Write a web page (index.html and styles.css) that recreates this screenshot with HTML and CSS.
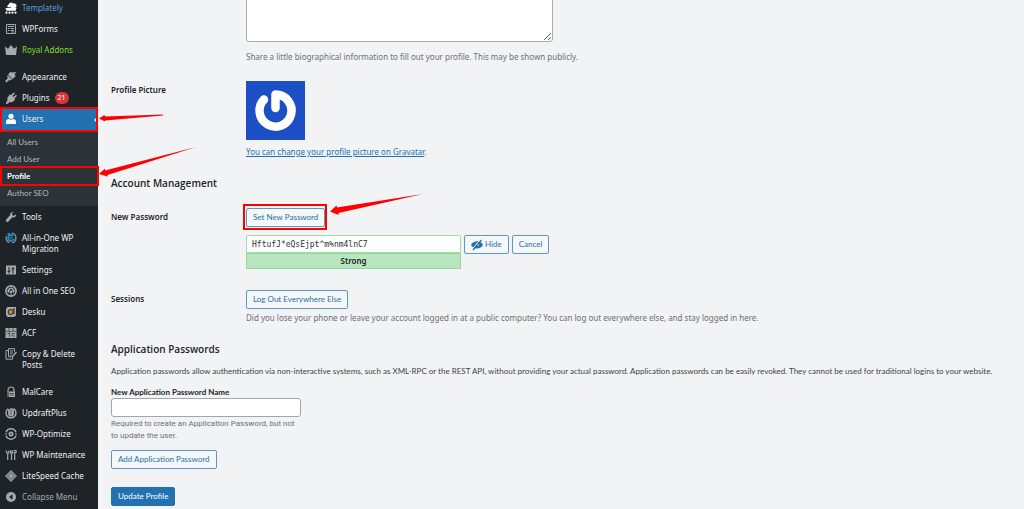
FILE: index.html
```
<!DOCTYPE html>
<html lang="en">
<head>
<meta charset="utf-8">
<title>Profile</title>
<link rel="stylesheet" href="styles.css">
</head>
<body>
<div class="layout">
<nav class="sidebar" aria-label="Main menu">
  <ul class="menu">
    <li><a class="item blue" href="#"><svg class="icon" viewBox="0 0 12 12"><path fill="#fff" d="M.5 6h11l-1 2.700h-9zM3 6a2.200 2.200 0 0 1 .6-3.600A2.600 2.600 0 0 1 8 1.500 2.400 2.400 0 0 1 10 6z"/><path stroke="#1d2327" stroke-width=".7" d="M2 5.500h4"/><circle cx="1.500" cy="10.700" r="1.100" fill="#fff"/><circle cx="4.500" cy="10.700" r="1.100" fill="#fff"/><circle cx="7.500" cy="10.700" r="1.100" fill="#fff"/><circle cx="10.500" cy="10.700" r="1.100" fill="#fff"/></svg><span>Templately</span></a></li>
    <li><a class="item" href="#"><svg class="icon" viewBox="0 0 12 12"><path fill="none" stroke="#a7aaad" d="M1.500 1.500h9v9h-9zM3 3.500h6M3 5.500h1.500M5.500 5.500H9M3 7.500h1.500M5.500 7.500H9M6.500 9H9"/></svg><span>WPForms</span></a></li>
    <li><a class="item green" href="#"><svg class="icon" viewBox="0 0 12 12"><path fill="#a7aaad" d="M0 2.500l3 2.200L6 1l3 3.700 3-2.200-1 8.500H1z"/></svg><span>Royal Addons</span></a></li>
    <li class="gap"><a class="item" href="#"><svg class="icon" viewBox="0 0 12 12"><path fill="#a7aaad" d="M5.500.8l1.500.8 4.500-.6-2 2.200L10.800 5 7.500 8.300 3 3.800zM2.600 4.200l4.500 4.500-1.700.6-1.100-.4-2.900 2.600L0 10.300l2.800-3-.6-1.500z"/></svg><span>Appearance</span></a></li>
    <li><a class="item" href="#"><svg class="icon" viewBox="0 0 12 12"><path fill="#a7aaad" d="M6 3L8.700.5l1.200 1L7.500 4l1 1L11 2.700l1 1.100-2.500 2.600.7 1-2.500 2.500-3.300.3-1.800 1.500-1.600.2V10.500l1.300-1.400.2-3.600L4.800 2.600z"/></svg><span>Plugins</span><span class="badge">21</span></a></li>
    <li class="current"><a class="item" href="#"><svg class="icon" viewBox="0 0 12 12"><circle cx="6" cy="3.300" r="2.600" fill="#fff"/><path fill="#fff" d="M1 11V8.500C1 6.800 2.700 6 4.200 6L6 7l1.800-1c1.500 0 3.200.8 3.200 2.500V11z"/></svg><span>Users</span></a>
      <ul class="submenu">
        <li><a href="#">All Users</a></li>
        <li><a href="#">Add User</a></li>
        <li><a class="active" href="#" aria-current="page">Profile</a></li>
        <li><a href="#">Author SEO</a></li>
      </ul>
    </li>
    <li><a class="item" href="#"><svg class="icon" viewBox="0 0 12 12"><path fill="#a7aaad" d="M11 3.200L9 4.800 7.400 4.300 7 2.800 8.600 1C6.800.6 4.800 2 5.100 4.200L1.200 8.400c-1.200 1.300.6 3.400 2.200 2.100l4-4.200C9.700 6.800 11.700 5.300 11 3.200z"/></svg><span>Tools</span></a></li>
    <li><a class="item" href="#"><svg class="icon" viewBox="0 0 12 12"><path fill="none" stroke="#8c9196" stroke-width="1.300" d="M6.500 1.200a4.800 4.800 0 0 1 .5 9.500M4.500 10.600A4.800 4.800 0 0 1 1.600 4"/><path fill="none" stroke="#2196cf" stroke-width="1.500" d="M8.300 4A3 3 0 1 0 9 6.500M2.500 2.500L5 1.500"/><circle cx="6" cy="6" r="1.600" fill="#157aae"/></svg><span>All-in-One WP Migration</span></a></li>
    <li><a class="item" href="#"><svg class="icon" viewBox="0 0 12 12"><path fill="#a7aaad" d="M1 1.500h10v9H1z"/><path stroke="#1d2327" d="M4 3v6.500M8 3v6.500M2.500 7.200h3M6.500 4.800h3"/></svg><span>Settings</span></a></li>
    <li><a class="item" href="#"><svg class="icon" viewBox="0 0 12 12"><circle cx="6" cy="6" r="5.100" fill="none" stroke="#a7aaad" stroke-width="1.600"/><path fill="none" stroke="#a7aaad" stroke-width="1.500" d="M3.700 7.500a2.700 2.700 0 1 1 4.600 0"/><path fill="#a7aaad" d="M4.500 5h.8v1h1.400V5h.8v2L6.500 8v3h-1V8l-1-1z"/></svg><span>All in One SEO</span></a></li>
    <li><a class="item" href="#"><svg class="icon" viewBox="0 0 12 12"><path fill="#a7aaad" d="M2.500 1H11v8.500L9 11H2.500L1 9V3z"/><circle cx="5.700" cy="6" r="3" fill="#39322b"/><circle cx="5.700" cy="6" r="2" fill="#d18a35"/><path stroke="#1d2327" d="M9 2v6"/></svg><span>Desku</span></a></li>
    <li><a class="item" href="#"><svg class="icon" viewBox="0 0 12 12"><path fill="#a7aaad" d="M.5 1h11v10H.5z"/><path stroke="#3a4148" stroke-width=".8" fill="none" d="M.5 4.300h11M4 1v3M8 1v3M4.500 5v5M2.500 6.500h2M7 6.500h3M7 9h3M7 6.500V9"/></svg><span>ACF</span></a></li>
    <li><a class="item" href="#"><svg class="icon" viewBox="0 0 12 12"><path fill="none" stroke="#a7aaad" d="M3.500.7h6v3M3.500.7v8h3M3.300 2.500H1v8.700h6.500V9M5 3h3M5 5h3M5 7h1.500"/><path stroke="#a7aaad" stroke-width="1.500" d="M7 9l4.500-5"/></svg><span>Copy &amp; Delete Posts</span></a></li>
    <li class="gap"><a class="item" href="#"><svg class="icon" viewBox="0 0 12 12"><path fill="none" stroke="#a7aaad" stroke-width="1.200" d="M3 6V4a3 3 0 0 1 6 0v2"/><path fill="#a7aaad" d="M3.500 5.500H10V11H3.500z"/><path stroke="#8e4a50" d="M2.500 6v5"/><path stroke="#1d2327" stroke-width=".6" d="M4.500 7.500H9M4.500 9H9"/></svg><span>MalCare</span></a></li>
    <li><a class="item" href="#"><svg class="icon" viewBox="0 0 12 12"><path fill="none" stroke="#a7aaad" stroke-width="1.400" d="M3 1.800a5 5 0 1 0 6 0"/><path fill="none" stroke="#a7aaad" stroke-width="1.800" d="M4 2v4.500a2 2 0 0 0 4 0V1.500"/><path stroke="#a7aaad" stroke-width="1.500" d="M6 1v6"/></svg><span>UpdraftPlus</span></a></li>
    <li><a class="item" href="#"><svg class="icon" viewBox="0 0 12 12"><path fill="none" stroke="#a7aaad" stroke-width="1.500" d="M1 4.200a5.400 5.400 0 0 1 10 0M1 7.800a5.400 5.400 0 0 0 10 0"/><circle cx="6" cy="6" r="2.500" fill="#a7aaad"/><circle cx="6" cy="6" r="1" fill="#4b5157"/><path stroke="#a7aaad" d="M0 6h2M10 6h2"/></svg><span>WP-Optimize</span></a></li>
    <li><a class="item" href="#"><svg class="icon" viewBox="0 0 12 12"><path fill="none" stroke="#a7aaad" stroke-width="1.200" d="M1.500 1.500v2l1.200 1 1.200-1v-2M2.700 4.500V11M6.500 4v7M5.500 2h2v2h-2zM9.700 4v7M8.500 1.500h2.500v2H8.500"/></svg><span>WP Maintenance</span></a></li>
    <li><a class="item" href="#"><svg class="icon" viewBox="0 0 12 12"><path fill="#8c9196" d="M6 0l6 6-6 6-6-6z"/><path fill="none" stroke="#646a70" stroke-width=".8" d="M6 2.500L9.500 6 6 9.500 2.500 6z"/><circle cx="6" cy="6" r="1.300" fill="#a7aaad"/></svg><span>LiteSpeed Cache</span></a></li>
    <li><button type="button" class="item collapse"><svg class="icon" viewBox="0 0 12 12"><circle cx="6" cy="6" r="5" fill="#a7aaad"/><path fill="#1d2327" d="M7.500 3.300v5.400L4 6z"/></svg><span>Collapse Menu</span></button></li>
  </ul>
</nav>
<main class="content">
  <form>
    <div class="row bio">
      <div></div>
      <div><textarea class="bio-text" aria-label="Biographical Info"></textarea>
      <p class="description">Share a little biographical information to fill out your profile. This may be shown publicly.</p></div>
    </div>
    <div class="row picture">
      <div class="label">Profile Picture</div>
      <div>
        <svg class="avatar" viewBox="0 0 59 59" role="img" aria-label="Avatar"><path fill="#1d4fc4" d="M0 0h59v59H0z"/><path fill="none" stroke="#fff" stroke-width="8.500" stroke-linecap="round" stroke-linejoin="round" d="M18 18.500A16 16 0 1 0 29.500 13.600V27"/></svg>
        <p class="description"><a class="link" href="#">You can change your profile picture on Gravatar</a>.</p>
      </div>
    </div>
    <h2 class="heading">Account Management</h2>
    <div class="row password">
      <label class="label" for="pass">New Password</label>
      <div>
        <button type="button" class="btn">Set New Password</button>
        <div class="pass-line">
          <div class="pass-box">
            <input id="pass" class="field pass-input" type="text" value="HftufJ*eQsEjpt^m%nm4lnC7">
            <div class="strength">Strong</div>
          </div>
          <button type="button" class="btn"><svg class="eye" viewBox="0 0 12 12"><path fill="#2271b1" d="M0 6c2-5 10-5 12 0-2 4.500-10 4.500-12 0z"/><circle cx="6.500" cy="5.500" r="1.500" fill="#f3f5f6"/><path stroke="#f3f5f6" d="M1 10.200L9.500.5"/><path stroke="#2271b1" stroke-width="1.300" d="M2 11l8.500-10"/></svg>Hide</button>
          <button type="button" class="btn">Cancel</button>
        </div>
      </div>
    </div>
    <div class="row sessions">
      <div class="label">Sessions</div>
      <div><button type="button" class="btn">Log Out Everywhere Else</button>
      <p class="description">Did you lose your phone or leave your account logged in at a public computer? You can log out everywhere else, and stay logged in here.</p></div>
    </div>
    <h2 class="heading">Application Passwords</h2>
    <p class="intro">Application passwords allow authentication via non-interactive systems, such as XML-RPC or the REST API, without providing your actual password. Application passwords can be easily revoked. They cannot be used for traditional logins to your website.</p>
    <div class="app-form">
      <label class="app-label" for="app">New Application Password Name</label>
      <input id="app" class="field" type="text">
      <p class="description">Required to create an Application Password, but not to update the user.</p>
      <button type="button" class="btn">Add Application Password</button>
      <button type="submit" class="btn primary">Update Profile</button>
    </div>
  </form>
</main>
<svg class="marks" width="430" height="235" viewBox="0 0 430 235" aria-hidden="true">
  <g fill="none" stroke="#f00" stroke-width="2"><path d="M1 108h96v23H1zM1 167h97v18H1zM244 205h82v24h-82z"/></g>
  <g fill="#f00"><path d="M163 114.500L105 116.500 104.500 115 99 118.500 105 121.500 105 120.500 163 115.500z"/><path d="M196 147L105 170.500 105 168.500 99 174 107.500 176.500 107.500 175z"/><path d="M423 194L337 207.500 336.500 205.500 330 211.500 338.500 215 338.500 213z"/></g>
</svg>
</div>
</body>
</html>
```
FILE: styles.css
```
* { box-sizing: border-box; }
body {
  margin: 0;
  background: #f1f3f5;
  color: #3c434a;
  font: 8px/12px "Noto Sans", "Open Sans", sans-serif;
}
ul, p, h2 { margin: 0; padding: 0; list-style: none; }
.layout { display: flex; position: relative; min-height: 100vh; overflow: hidden; }

.sidebar { flex: none; width: 98px; background: #1d2327; }
.menu { margin-top: -3px; }
.item {
  display: flex;
  gap: 5px;
  width: 100%;
  padding: 5px 4px 5px 5px;
  border: 0;
  background: none;
  color: #f0f0f1;
  font: inherit;
  line-height: 11px;
  text-align: left;
  text-decoration: none;
}
.icon { flex: none; width: 12px; height: 12px; margin-bottom: -1px; }
.blue { color: #5f9fdc; }
.green { color: #84dc2c; }
.gap { margin-top: 6px; }
.badge {
  height: 12px;
  margin-bottom: -1px;
  padding: 0 3px;
  border-radius: 6px;
  background: #d63638;
  color: #fff;
  font-size: 7px;
}
.current { position: relative; background: #2271b1; }
.current > .item::after {
  content: "";
  position: absolute;
  top: 8px;
  right: 0;
  border: 4px solid transparent;
  border-right-color: #f1f3f5;
  border-left: 0;
}
.current > .item { padding-bottom: 6px; }
.submenu { padding: 4px 0; background: #2c3338; }
.submenu a {
  display: block;
  padding: 0 7px;
  color: #b4b9be;
  font: 8px/17px Lato, "Noto Sans", sans-serif;
  text-decoration: none;
}
.submenu .active { color: #fff; font-weight: 700; }
.collapse { color: #a7aaad; }

.content { flex: 1; min-width: 0; padding: 0 14px 0 13px; }
.row { display: grid; grid-template-columns: 135px 1fr; }
.label { color: #1d2327; font-weight: 600; }
.description { color: #6c7177; }
.bio-text {
  display: block;
  width: 307px;
  height: 50px;
  margin-top: -8px;
  border: 1px solid #a9adb3;
  border-radius: 3px;
  background: #fff;
}
.bio .description { margin-top: 9px; }
.picture { margin-top: 18px; }
.picture .label { padding-top: 3px; }
.avatar { display: block; width: 59px; height: 59px; }
.picture .description { margin-top: 6px; }
.link { color: #2271b1; }
.heading {
  color: #1d2327;
  font: 600 10px/14px "Open Sans", "Noto Sans", sans-serif;
}
.picture + .heading { margin-top: 18px; }
.password { margin-top: 18px; }
.password .label, .sessions .label { padding-top: 3px; }
.btn {
  height: 19px;
  padding: 0 6px;
  border: 1px solid #5e97c6;
  border-radius: 2px;
  background: #f6f7f7;
  color: #2271b1;
  font: 8px/17px Lato, "Noto Sans", sans-serif;
  white-space: nowrap;
}
.pass-line { display: flex; align-items: flex-start; gap: 3px; margin-top: 8px; }
.pass-box { width: 215px; }
.field {
  display: block;
  width: 100%;
  height: 19px;
  padding: 0 5px;
  border: 1px solid #a2a6ac;
  border-radius: 3px;
  background: #fff;
  color: #2c3338;
}
.pass-input {
  height: 18px;
  border-color: #9fdfa6;
  border-radius: 2px 2px 0 0;
  font: 8px "DejaVu Sans Mono", monospace;
}
.strength {
  border: 1px solid #94d59c;
  background: #b8e6bf;
  color: #1d2327;
  font-weight: 600;
  line-height: 14px;
  text-align: center;
}
.eye { width: 12px; height: 12px; margin-right: 2px; vertical-align: middle; }
.sessions { margin-top: 21px; }
.sessions .description { margin-top: 3px; }
.sessions + .heading { margin-top: 18px; }
.intro { margin-top: 9px; font-family: Lato, "Noto Sans", sans-serif; }
.app-form { display: flex; flex-direction: column; align-items: flex-start; width: 190px; }
.app-label {
  margin: 9px 0 0;
  color: #1d2327;
  font-family: Lato, "Noto Sans", sans-serif;
  font-weight: 700;
}
.app-form .description {
  margin: 1px 0 8px;
  font-family: Roboto, "Noto Sans", sans-serif;
}
.primary {
  margin-top: 18px;
  border-color: #2271b1;
  background: #2271b1;
  color: #fff;
}
.marks { position: absolute; top: 0; left: 0; pointer-events: none; }
```
